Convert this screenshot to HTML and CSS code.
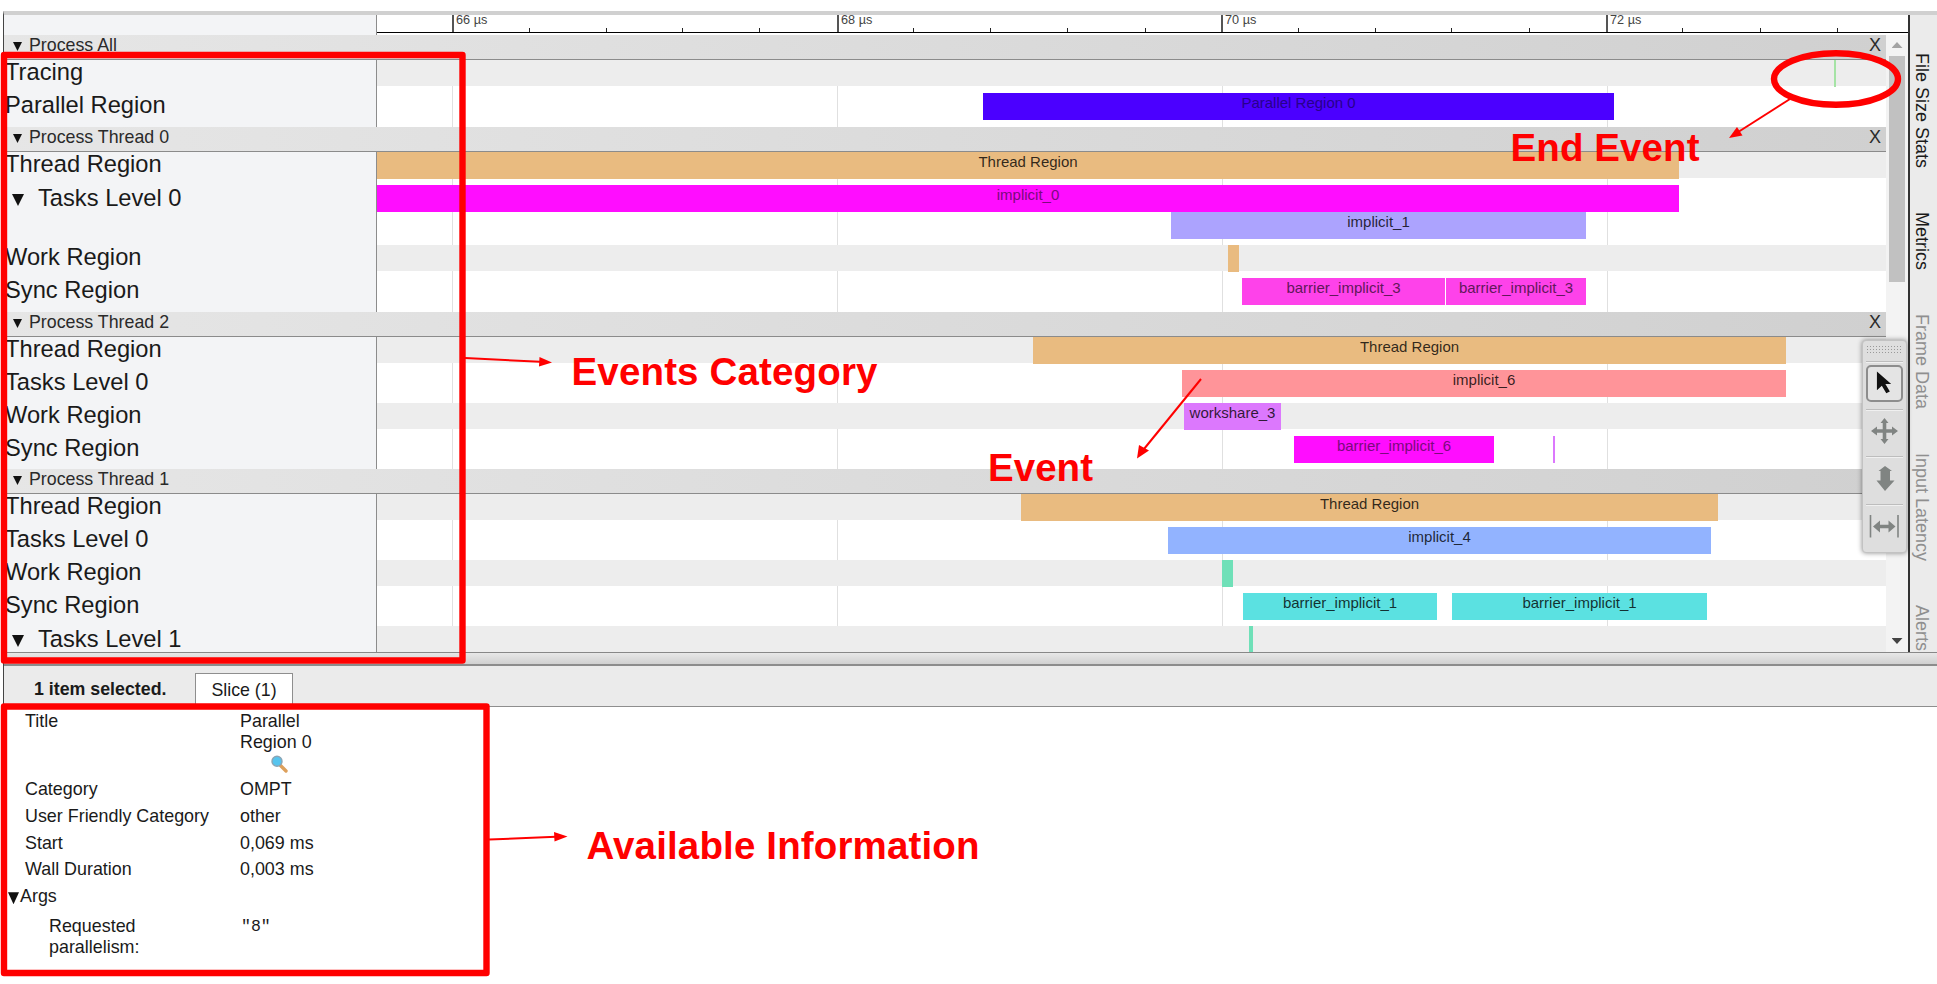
FILE: index.html
```html
<!DOCTYPE html>
<html lang="en">
<head>
    <meta charset="UTF-8">
    <meta name="viewport" content="width=device-width, initial-scale=1.0">
    <title>Trace Viewer</title>
    <link rel="stylesheet" href="styles.css">
</head>
<body>
    <div class="viewer">
        <div class="top">
            <div class="timeline">
                <div class="ruler">
                    <div class="ruler-heading"></div>
                    <div class="ruler-scale">
                        <span class="tick major" style="left: 75px;">66 µs</span>
                        <span class="tick" style="left: 152px;"></span>
                        <span class="tick" style="left: 229px;"></span>
                        <span class="tick" style="left: 305px;"></span>
                        <span class="tick" style="left: 382px;"></span>
                        <span class="tick major" style="left: 460px;">68 µs</span>
                        <span class="tick" style="left: 536px;"></span>
                        <span class="tick" style="left: 613px;"></span>
                        <span class="tick" style="left: 690px;"></span>
                        <span class="tick" style="left: 768px;"></span>
                        <span class="tick major" style="left: 844px;">70 µs</span>
                        <span class="tick" style="left: 921px;"></span>
                        <span class="tick" style="left: 998px;"></span>
                        <span class="tick" style="left: 1074px;"></span>
                        <span class="tick" style="left: 1152px;"></span>
                        <span class="tick major" style="left: 1229px;">72 µs</span>
                        <span class="tick" style="left: 1305px;"></span>
                        <span class="tick" style="left: 1383px;"></span>
                        <span class="tick" style="left: 1460px;"></span>
                    </div>
                </div>
                <div class="scroll-area">
                    <div class="tracks">
                        <div class="gridline" style="left: 448px;"></div>
                        <div class="gridline" style="left: 833px;"></div>
                        <div class="gridline" style="left: 1218px;"></div>
                        <div class="gridline" style="left: 1603px;"></div>

                        <div class="process-header"><i class="arrow"></i><span>Process All</span><b>X</b></div>
                        <div class="track shaded">
                            <div class="label">Tracing</div>
                            <div class="lane">
                                <div class="slice lime" style="left: 1457px; width: 2px;"></div>
                            </div>
                        </div>
                        <div class="track last">
                            <div class="label">Parallel Region</div>
                            <div class="lane">
                                <div class="slice blue" style="left: 606px; width: 631px;">Parallel Region 0</div>
                            </div>
                        </div>

                        <div class="process-header"><i class="arrow"></i><span>Process Thread 0</span><b>X</b></div>
                        <div class="track shaded">
                            <div class="label">Thread Region</div>
                            <div class="lane">
                                <div class="slice tan" style="left: 0; width: 1302px;">Thread Region</div>
                            </div>
                        </div>
                        <div class="track double">
                            <div class="label expandable"><i class="arrow"></i>Tasks Level 0</div>
                            <div class="lane">
                                <div class="slice magenta" style="left: 0; width: 1302px;">implicit_0</div>
                                <div class="slice lavender second" style="left: 794px; width: 415px;">implicit_1</div>
                            </div>
                        </div>
                        <div class="track shaded">
                            <div class="label">Work Region</div>
                            <div class="lane">
                                <div class="slice tan" style="left: 851px; width: 11px;"></div>
                            </div>
                        </div>
                        <div class="track last">
                            <div class="label">Sync Region</div>
                            <div class="lane">
                                <div class="slice pink" style="left: 865px; width: 203px;">barrier_implicit_3</div>
                                <div class="slice pink" style="left: 1069px; width: 140px;">barrier_implicit_3</div>
                            </div>
                        </div>

                        <div class="process-header"><i class="arrow"></i><span>Process Thread 2</span><b>X</b></div>
                        <div class="track shaded">
                            <div class="label">Thread Region</div>
                            <div class="lane">
                                <div class="slice tan" style="left: 656px; width: 753px;">Thread Region</div>
                            </div>
                        </div>
                        <div class="track">
                            <div class="label">Tasks Level 0</div>
                            <div class="lane">
                                <div class="slice salmon" style="left: 805px; width: 604px;">implicit_6</div>
                            </div>
                        </div>
                        <div class="track shaded">
                            <div class="label">Work Region</div>
                            <div class="lane">
                                <div class="slice violet" style="left: 807px; width: 97px;">workshare_3</div>
                            </div>
                        </div>
                        <div class="track">
                            <div class="label">Sync Region</div>
                            <div class="lane">
                                <div class="slice magenta" style="left: 917px; width: 200px;">barrier_implicit_6</div>
                                <div class="slice violet" style="left: 1176px; width: 2px;"></div>
                            </div>
                        </div>

                        <div class="process-header"><i class="arrow"></i><span>Process Thread 1</span><b>X</b></div>
                        <div class="track shaded">
                            <div class="label">Thread Region</div>
                            <div class="lane">
                                <div class="slice tan" style="left: 644px; width: 697px;">Thread Region</div>
                            </div>
                        </div>
                        <div class="track">
                            <div class="label">Tasks Level 0</div>
                            <div class="lane">
                                <div class="slice sky" style="left: 791px; width: 543px;">implicit_4</div>
                            </div>
                        </div>
                        <div class="track shaded">
                            <div class="label">Work Region</div>
                            <div class="lane">
                                <div class="slice green" style="left: 845px; width: 11px;"></div>
                            </div>
                        </div>
                        <div class="track">
                            <div class="label">Sync Region</div>
                            <div class="lane">
                                <div class="slice cyan" style="left: 866px; width: 194px;">barrier_implicit_1</div>
                                <div class="slice cyan" style="left: 1075px; width: 255px;">barrier_implicit_1</div>
                            </div>
                        </div>
                        <div class="track shaded">
                            <div class="label expandable"><i class="arrow"></i>Tasks Level 1</div>
                            <div class="lane">
                                <div class="slice green" style="left: 872px; width: 4px;"></div>
                            </div>
                        </div>
                    </div>
                    <div class="scrollbar">
                        <i class="up"></i>
                        <div class="thumb"></div>
                        <i class="down"></i>
                    </div>
                </div>
            </div>
            <div class="side-tabs">
                <span>File Size Stats</span>
                <span>Metrics</span>
                <span class="off">Frame Data</span>
                <span class="off">Input Latency</span>
                <span class="off">Alerts</span>
            </div>
        </div>
        <div class="splitter"></div>
        <div class="analysis-header">
            <span class="selected-count">1 item selected.</span>
            <span class="tab">Slice (1)</span>
        </div>
        <div class="analysis">
            <div class="row title"><span>Title</span><div>Parallel<br>Region 0
                <svg class="magnifier" width="17" height="18" viewBox="0 0 17 18">
                    <path d="M9.500 10.500L15 16" stroke="#dda05c" stroke-width="3.4" stroke-linecap="round"/>
                    <circle cx="6" cy="6.200" r="5" fill="#56c4ee" stroke="#8ba5b5" stroke-width="1.4"/>
                </svg></div></div>
            <div class="row"><span>Category</span><div>OMPT</div></div>
            <div class="row"><span>User Friendly Category</span><div>other</div></div>
            <div class="row"><span>Start</span><div>0,069 ms</div></div>
            <div class="row"><span>Wall Duration</span><div>0,003 ms</div></div>
            <div class="row args"><i class="arrow"></i>Args</div>
            <div class="row nested"><span>Requested<br>parallelism:</span><div class="mono">"8"</div></div>
        </div>
    </div>

    <div class="toolbox">
        <div class="grip"></div>
        <div class="tool active">
            <svg width="37" height="37" viewBox="0 0 37 37"><path d="M10 5V26L15.500 21L20.500 29.500L24.500 27.500L19.500 19H26Z" fill="#111"/></svg>
        </div>
        <div class="tool">
            <svg width="37" height="37" viewBox="0 0 37 37"><path d="M18.500 5L22.500 10H20.300V16.200H26V13.500L32 18L26 22.500V19.800H20.300V26H22.500L18.500 31L14.500 26H16.700V19.800H11V22.500L5 18L11 13.500V16.200H16.700V10H14.500Z" fill="#808482"/></svg>
        </div>
        <div class="tool">
            <svg width="37" height="37" viewBox="0 0 37 37"><path d="M19 6L26 11H24V20.500H28.500L19 31L10.500 20.500H14.500V11H12.500Z" fill="#808482"/></svg>
        </div>
        <div class="tool">
            <svg width="37" height="37" viewBox="0 0 37 37"><path d="M4.500 7V29.500M32 7V29.500" stroke="#808482" stroke-width="1.6"/><path d="M7 18.500L14 12.500V16.700H22.500V12.500L29.500 18.500L22.500 24.500V20.300H14V24.500Z" fill="#808482"/></svg>
        </div>
    </div>

    <!-- annotations drawn on top of the viewer -->
    <svg class="annotations" width="1937" height="984" viewBox="0 0 1937 984">
        <g fill="none" stroke="#f00" stroke-width="6.4" stroke-linejoin="round">
            <rect x="4" y="55" width="458.500" height="605.500"/>
            <rect x="4" y="706.500" width="482.500" height="266.500"/>
            <ellipse cx="1836" cy="79" rx="62" ry="25.800"/>
        </g>
        <g stroke="#f00" stroke-width="2">
            <path d="M465 358L540 361.800"/>
            <path d="M1201 379L1144 449"/>
            <path d="M1790 99L1739 131.500"/>
            <path d="M489 839.500L556 836.800"/>
        </g>
        <g fill="#f00">
            <path d="M552 362.500L539 366.500L539.500 357Z"/>
            <path d="M1137 458.500L1139 445L1149 450.500Z"/>
            <path d="M1729 138L1737 127L1742.500 135.500Z"/>
            <path d="M567.500 836.500L554.500 841.500L554 832Z"/>
        </g>
        <g class="note">
            <text x="1510.500" y="161" textLength="189">End Event</text>
            <text x="571.500" y="385" textLength="306">Events Category</text>
            <text x="988" y="481" textLength="105">Event</text>
            <text x="586.500" y="859" textLength="393">Available Information</text>
        </g>
    </svg>
</body>
</html>
```

FILE: styles.css
```css
* {
    box-sizing: border-box;
}

body {
    margin: 0;
    background: #fff;
    color: #1a1a1a;
    font-family: "Liberation Sans", Arial, sans-serif;
    width: 1937px;
    height: 984px;
    overflow: hidden;
    position: relative;
}

.viewer {
    margin: 11px 0 0 3px;
    height: 962px;
    border-top: 4px solid #d0d0d0;
    border-left: 1px solid #444;
}

.top {
    display: flex;
    height: 638px;
    border-bottom: 1px solid #888;
}

.timeline {
    width: 1904px;
}

/* ruler */
.ruler {
    display: flex;
    height: 20px;
}

.ruler-heading {
    width: 373px;
    background: #f3f4f6;
    border-right: 1px solid #8c8c8c;
}

.ruler-scale {
    flex: 1;
    height: 18px;
    border-bottom: 1px solid #000;
    position: relative;
}

.tick {
    position: absolute;
    bottom: 0;
    height: 4px;
    border-left: 1px solid #222;
}

.tick.major {
    height: 17px;
    border-left: 2px solid #555;
    padding-left: 2px;
    font-size: 12.7px;
    line-height: 10px;
    color: #444;
    white-space: nowrap;
}

/* tracks */
.scroll-area {
    display: flex;
    height: 617px;
}

.tracks {
    width: 1882px;
    height: 617px;
    overflow: hidden;
    position: relative;
}

.gridline {
    position: absolute;
    top: 25px;
    bottom: 0;
    width: 1px;
    background: rgba(0, 0, 0, 0.12);
}

.process-header {
    display: flex;
    align-items: center;
    height: 25px;
    padding: 0 5px 4px 9px;
    border-bottom: 1px solid #8b8b8b;
    background: linear-gradient(to right, #e6e6e6, #d0d0d0);
    font-size: 17.800px;
    line-height: 20px;
    position: relative;
    color: #2a2a2a;
}

.process-header span {
    flex: 1;
    margin-left: 7px;
}

.process-header b {
    font-weight: normal;
    font-size: 18px;
}

.arrow {
    width: 9px;
    height: 9px;
    background: #111;
    clip-path: polygon(0 0, 100% 0, 50% 100%);
}

.process-header .arrow {
    margin-top: 3px;
}

.track {
    display: flex;
    height: 33px;
}

.track.last {
    height: 34px;
}

.track.double {
    height: 60px;
}

.label {
    width: 373px;
    padding-left: 1px;
    background: #f3f4f6;
    border-right: 1px solid #8c8c8c;
    font-size: 23.7px;
    line-height: 25px;
    white-space: nowrap;
}

.label.expandable {
    padding-left: 8px;
    line-height: 27px;
}

.expandable .arrow {
    display: inline-block;
    width: 12px;
    height: 12px;
    margin-right: 14px;
}

.lane {
    flex: 1;
    height: 26px;
    position: relative;
}

.shaded .lane {
    background: #ededed;
}

.slice {
    position: absolute;
    top: 0;
    height: 27px;
    font-size: 15px;
    line-height: 19px;
    text-align: center;
    white-space: nowrap;
    color: rgba(0, 0, 0, 0.8);
}

.slice.second {
    top: 27px;
}

.tan { background: #e9bb80; }
.blue { background: #4b00ff; color: #28008c; }
.magenta { background: #ff0dff; color: #7a0a7c; }
.lavender { background: #aca3fe; }
.pink { background: #fe42ea; color: #62185a; }
.salmon { background: #ff9499; }
.violet { background: #dc78fd; }
.sky { background: #92b3ff; }
.green { background: #6fe0b8; }
.cyan { background: #5be1e1; }
.lime { background: #a5e3a5; }

.scrollbar {
    width: 22px;
    background: #f3f3f3;
    display: flex;
    flex-direction: column;
    align-items: center;
    padding: 7px 0 8px;
}

.up {
    width: 11px;
    height: 6px;
    background: #a3a3a3;
    clip-path: polygon(50% 0, 100% 100%, 0 100%);
}

.thumb {
    width: 16px;
    height: 226px;
    margin: 8px 0 auto;
    background: #c1c1c1;
}

.down {
    width: 11px;
    height: 6px;
    background: #444;
    clip-path: polygon(0 0, 100% 0, 50% 100%);
}

.side-tabs {
    flex: 1;
    display: flex;
    flex-direction: column;
    gap: 44px;
    padding: 38px 5px 0 0;
    border-left: 2px solid #333;
    background: #ebebeb;
    font-size: 18px;
    line-height: 20px;
}

.side-tabs span {
    writing-mode: vertical-rl;
    white-space: nowrap;
}

.side-tabs .off {
    color: #8f8f8f;
}

/* analysis panel */
.splitter {
    height: 13px;
    background: linear-gradient(#e8e8e8, #d0d0d0);
    border-bottom: 2px solid #8c8c8c;
}

.analysis-header {
    display: flex;
    height: 41px;
    padding: 7px 0 0 30px;
    background: #ebebeb;
    border-bottom: 1px solid #8e8e8e;
    font-size: 17.8px;
}

.selected-count {
    width: 161px;
    font-weight: bold;
    line-height: 33px;
}

.tab {
    width: 98px;
    height: 34px;
    background: #fff;
    border: 1px solid #8e8e8e;
    border-bottom: none;
    text-align: center;
    line-height: 32px;
}

.analysis {
    padding-top: 4px;
    font-size: 17.9px;
    line-height: 21px;
}

.row {
    display: flex;
    height: 26.8px;
    padding: 3px 0 0 21px;
}

.row span {
    width: 215px;
    white-space: nowrap;
}

.row.title {
    height: 65px;
    padding-top: 0;
}

.magnifier {
    display: block;
    margin: 2px 0 0 31px;
}

.row.args {
    padding-left: 4px;
}

.args .arrow {
    width: 11px;
    height: 12px;
    margin: 6px 1px 0 0;
}

.row.nested {
    padding: 6px 0 0 45px;
}

.nested span {
    width: 192px;
}

.mono {
    font-family: "Liberation Mono", monospace;
    font-size: 16.5px;
}

/* floating mouse mode selector */
.toolbox {
    position: absolute;
    left: 1862px;
    top: 340px;
    width: 45px;
    height: 213px;
    padding: 4px 3px;
    border: 1px solid #c2c2c2;
    border-radius: 4px;
    background: #dedede;
    box-shadow: 0 0 5px rgba(0, 0, 0, 0.45);
}

.grip {
    height: 10px;
    margin-bottom: 6px;
    background: radial-gradient(circle, #999 0.8px, transparent 1px) 0 0 / 3px 3px;
}

.tool {
    height: 47.6px;
    padding-top: 3px;
    border-top: 1px solid #bdbdbd;
    box-shadow: inset 0 1px #f0f0f0;
}

.tool svg {
    display: block;
}

.tool.active svg {
    border: 2px solid #8d8d8d;
    border-radius: 5px;
    background: #e4e4e4;
}

.annotations {
    position: absolute;
    left: 0;
    top: 0;
}

.note {
    fill: #f00;
    font-size: 38.5px;
    font-weight: bold;
}
```
